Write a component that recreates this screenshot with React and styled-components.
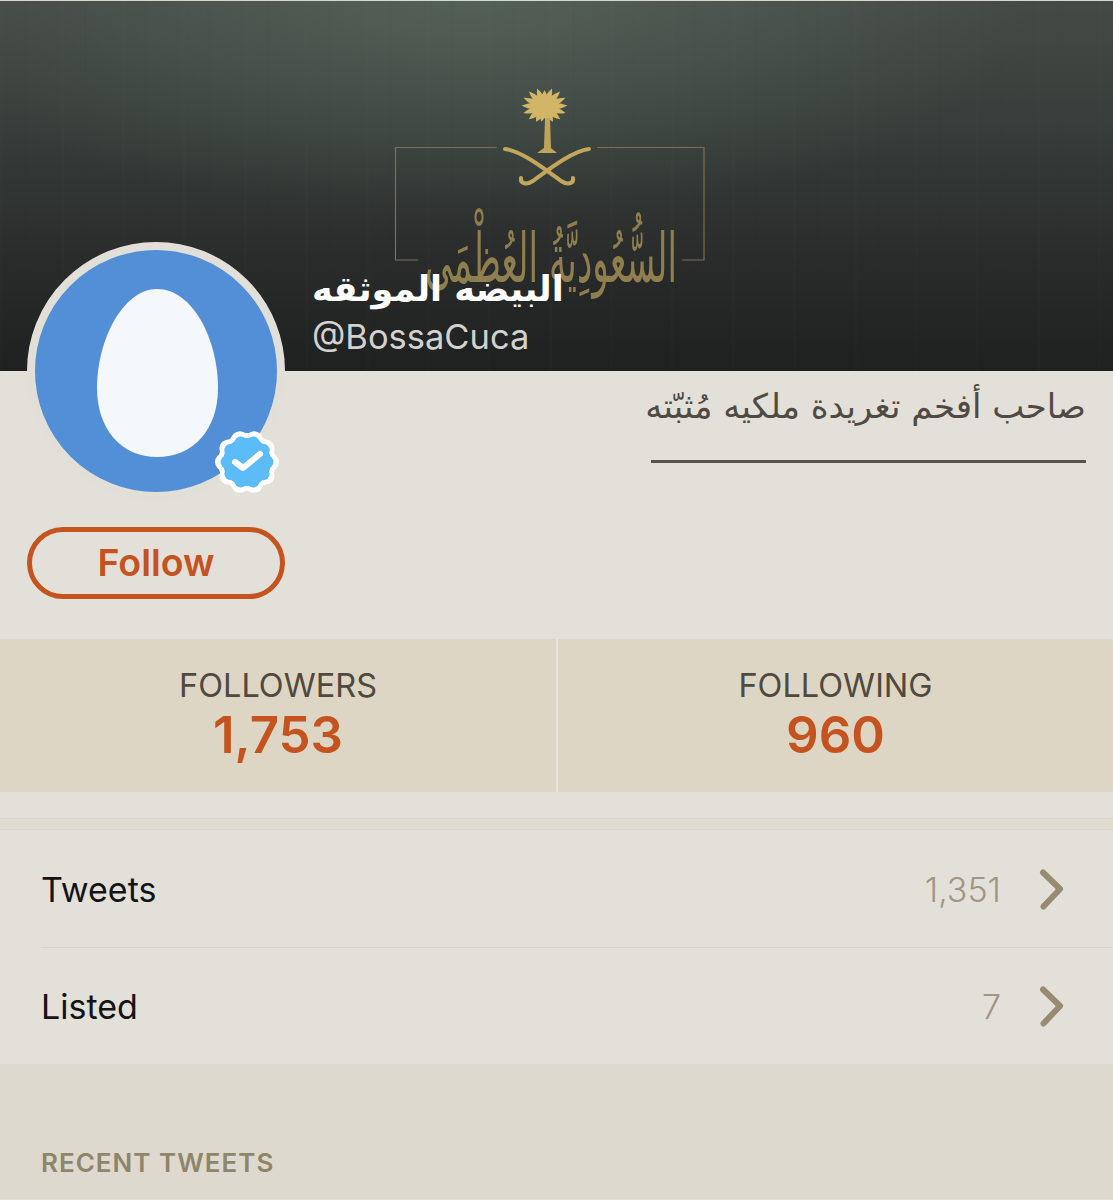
import styled, { createGlobalStyle } from 'styled-components';

const GlobalStyle = createGlobalStyle`
  html, body {
    margin: 0;
    padding: 0;
    background: #e3e0d9;
  }
  body {
    font-family: Inter, "Liberation Sans", sans-serif;
  }
`;

const Page = styled.div`
  width: 1113px;
  height: 1200px;
  overflow: hidden;
  background: #e3e0d9;
`;

const Banner = styled.header`
  position: relative;
  height: 371px;
  box-sizing: border-box;
  padding: 0 0 12px 312px;
  display: flex;
  flex-direction: column;
  justify-content: flex-end;
  overflow: hidden;
  border-top: 1px solid #d8d6cd;
  background:
    repeating-linear-gradient(90deg, rgba(255, 255, 255, 0.006) 0 3px, rgba(255, 255, 255, 0) 3px 23px, rgba(0, 0, 0, 0.012) 23px 26px, rgba(0, 0, 0, 0) 26px 61px),
    radial-gradient(ellipse 560px 220px at 42% 0, rgba(98, 118, 104, 0.5), rgba(98, 118, 104, 0) 100%),
    linear-gradient(#454a46 0, #373d3a 35%, #2b2e2d 65%, #1f2020 100%);
`;

const Crest = styled.svg`
  position: absolute;
  left: 0;
  top: -1px;
`;

const Name = styled.h1`
  position: relative;
  margin: 0;
  width: 252px;
  font: 700 35px/51px "DejaVu Sans", sans-serif;
  color: #fff;
  white-space: nowrap;
  text-align: left;
`;

const Handle = styled.div`
  position: relative;
  font: 400 34.5px/44px Inter, "Liberation Sans", sans-serif;
  color: #d2d2d0;
`;

const Profile = styled.section`
  height: 268px;
  display: flex;
`;

const Side = styled.div`
  width: 258px;
  margin-left: 27px;
  display: flex;
  flex-direction: column;
  gap: 27px;
`;

const Avatar = styled.div`
  position: relative;
  z-index: 1;
  width: 258px;
  height: 258px;
  margin-top: -129px;
  box-sizing: border-box;
  border: 8px solid #e2dfd8;
  border-radius: 50%;
  background: #528fd6;
`;

const Egg = styled.svg`
  position: absolute;
  left: 62px;
  top: 38px;
`;

const Badge = styled.svg`
  position: absolute;
  left: 179px;
  top: 179px;
`;

const FollowButton = styled.button`
  height: 72px;
  padding: 0 0 1px;
  box-sizing: border-box;
  border: 5px solid #c5531f;
  border-radius: 36px;
  background: transparent;
  color: #c5531f;
  font: 600 37.5px/1 Inter, "Liberation Sans", sans-serif;
`;

const Bio = styled.div`
  flex: 1;
  padding: 8px 27px 0 0;
  display: flex;
  flex-direction: column;
  align-items: flex-end;
`;

const BioText = styled.p`
  margin: 0;
  font: 400 34px/54px "DejaVu Sans", sans-serif;
  color: #4f4b44;
  white-space: nowrap;
`;

const BioRule = styled.div`
  width: 435px;
  height: 3px;
  margin-top: 27px;
  background: #57524a;
`;

const Stats = styled.section`
  height: 153px;
  display: grid;
  grid-template-columns: 556px 1fr;
  background: #ddd6c5;
`;

const Stat = styled.div`
  display: flex;
  flex-direction: column;
  align-items: center;
  padding-top: 28px;
  border-left: ${(p) => (p.$divided ? '2px solid #e8e5de' : '0')};
`;

const StatLabel = styled.div`
  font: 400 32.5px/38px Inter, "Liberation Sans", sans-serif;
  color: #50493e;
`;

const StatValue = styled.div`
  font: 600 51px/60px Inter, "Liberation Sans", sans-serif;
  color: #c5531f;
`;

const Spacer = styled.div`
  height: 26px;
`;

const Band = styled.div`
  height: 12px;
  box-sizing: border-box;
  background: #e0dcd2;
  border-top: 1px solid #d9d5ca;
  border-bottom: 1px solid #d9d5ca;
`;

const List = styled.ul`
  margin: 0;
  padding: 0 0 0 41px;
  list-style: none;
  border-bottom: 1px solid #dcd8cc;
`;

const Row = styled.li`
  height: 117px;
  box-sizing: border-box;
  padding-right: 49px;
  display: flex;
  align-items: center;
  border-top: ${(p) => (p.$first ? '0' : '1px solid #d8d4c9')};
`;

const RowLabel = styled.span`
  flex: 1;
  padding-top: 2px;
  font: 400 34px/1 Inter, "Liberation Sans", sans-serif;
  color: #141414;
`;

const RowValue = styled.span`
  margin-right: 37px;
  padding-top: 2px;
  font: 300 34px/1 Inter, "Liberation Sans", sans-serif;
  color: #9f9683;
`;

const Recent = styled.section`
  height: 134px;
  box-sizing: border-box;
  padding: 82px 0 0 41px;
  background: #ddd9cf;
`;

const RecentTitle = styled.h2`
  margin: 0;
  font: 600 26px/32px Inter, "Liberation Sans", sans-serif;
  letter-spacing: 1px;
  color: #8f8569;
`;

const Chevron = () => (
  <svg width="26" height="42" viewBox="0 0 26 42">
    <path
      d="M5 4.500 L22 21 L5.500 38.500"
      fill="none"
      stroke="#978c72"
      strokeWidth="6"
      strokeLinecap="round"
      strokeLinejoin="round"
    />
  </svg>
);

// angle, length of each palm frond
const FRONDS = [
  [-90, 17], [-68, 20], [-112, 20], [-45, 22], [-135, 22], [-24, 23], [-156, 23],
  [-4, 23], [-176, 23], [16, 22], [164, 22], [38, 20], [142, 20], [60, 17], [120, 17], [78, 15], [102, 15],
];

const CrestArt = () => (
  <Crest width="1113" height="371" viewBox="0 0 1113 371">
    <g fill="none" stroke="#7d7050" strokeWidth="1.2">
      <path d="M497 147.500 H395.500 V260 H418" />
      <path d="M597 147.500 H704 V260 H682" />
    </g>
    <g fill="#d2b567">
      {FRONDS.map(([a, len]) => (
        <path
          key={a}
          d={`M0 -3.500 Q${len * 0.6} -4.500 ${len} 0 Q${len * 0.6} 4.500 0 3.500 Z`}
          transform={`translate(544.500 107) rotate(${a})`}
        />
      ))}
      <circle cx="544.500" cy="107" r="6" />
    </g>
    <path d="M545 118 L550 118 L551 148 L557 153 L537 153 L544 148 Z" fill="#c0a45a" />
    <g fill="none" stroke="#c2a65b" strokeWidth="4" strokeLinecap="round">
      <path d="M505 149 C522 151 546 170 561 181 C567 185 574 184 573 178" />
      <path d="M589 149 C572 151 548 170 533 181 C527 185 520 184 521 178" />
    </g>
    <text
      x="551"
      y="282"
      textAnchor="middle"
      direction="rtl"
      fontFamily="DejaVu Sans, sans-serif"
      fontSize="68"
      fill="#8f7f4e"
      textLength="252"
      lengthAdjust="spacingAndGlyphs"
    >
      السُّعُودِيَّةُ العُظْمَى
    </text>
  </Crest>
);

const SCALLOPS = [0, 36, 72, 108, 144, 180, 216, 252, 288, 324];

const Lobes = ({ r, d, fill }) =>
  SCALLOPS.map((a) => (
    <circle key={a} r={r} cx={d * Math.cos((a * Math.PI) / 180)} cy={d * Math.sin((a * Math.PI) / 180)} fill={fill} />
  ));

const VerifiedBadge = () => (
  <Badge width="66" height="66" viewBox="-33 -33 66 66">
    <circle r="29" fill="#fff" />
    <Lobes r={9} d={23} fill="#fff" />
    <circle r="24" fill="#5bbcf7" />
    <Lobes r={6.5} d={20} fill="#5bbcf7" />
    <path d="M-12 0 L-4 6 L13 -8" fill="none" stroke="#fff" strokeWidth="6" strokeLinecap="round" strokeLinejoin="round" />
  </Badge>
);

const App = () => (
  <Page>
    <GlobalStyle />
    <Banner>
      <CrestArt />
      <Name dir="rtl">البيضه الموثقه</Name>
      <Handle>@BossaCuca</Handle>
    </Banner>
    <Profile>
      <Side>
        <Avatar>
          <Egg width="122" height="170" viewBox="0 0 122 170">
            <path d="M60 1 C96 1 121 52 121 100 C121 142 96 169 60 169 C25 169 0 142 0 100 C0 52 26 1 60 1 Z" fill="#f4f7fb" />
          </Egg>
          <VerifiedBadge />
        </Avatar>
        <FollowButton>Follow</FollowButton>
      </Side>
      <Bio>
        <BioText dir="rtl">صاحب أفخم تغريدة ملكيه مُثبّته</BioText>
        <BioRule />
      </Bio>
    </Profile>
    <Stats>
      <Stat>
        <StatLabel>FOLLOWERS</StatLabel>
        <StatValue>1,753</StatValue>
      </Stat>
      <Stat $divided>
        <StatLabel>FOLLOWING</StatLabel>
        <StatValue>960</StatValue>
      </Stat>
    </Stats>
    <Spacer />
    <Band />
    <List>
      <Row $first>
        <RowLabel>Tweets</RowLabel>
        <RowValue>1,351</RowValue>
        <Chevron />
      </Row>
      <Row>
        <RowLabel>Listed</RowLabel>
        <RowValue>7</RowValue>
        <Chevron />
      </Row>
    </List>
    <Recent>
      <RecentTitle>RECENT TWEETS</RecentTitle>
    </Recent>
  </Page>
);

export default App;
